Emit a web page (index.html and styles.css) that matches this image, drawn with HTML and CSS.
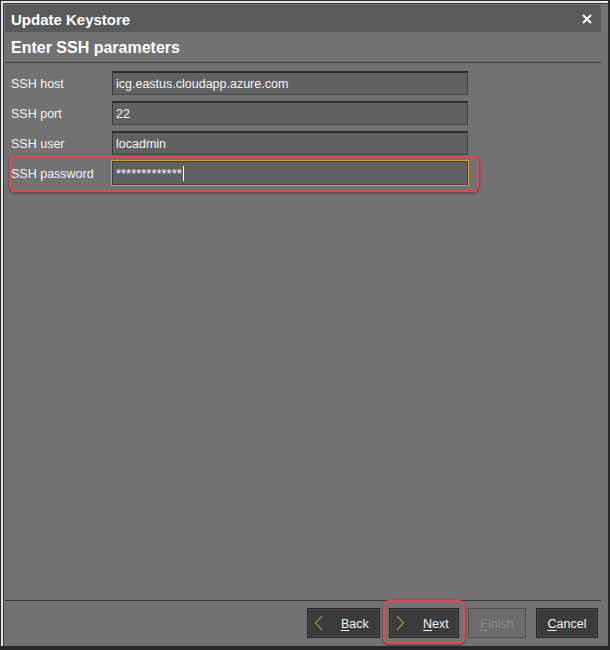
FILE: index.html
```html
<!DOCTYPE html>
<html>
<head>
<meta charset="utf-8">
<link rel="stylesheet" href="styles.css">
</head>
<body>
<div class="win">
  <div class="hl">
    <div class="in">
      <div class="titlebar">
        <span class="title">Update Keystore</span>
        <svg class="close" width="10" height="10" viewBox="0 0 10 10"><path d="M1 1 L9 9 M9 1 L1 9" stroke="#ffffff" stroke-width="2" fill="none"/></svg>
      </div>
      <div class="header">Enter SSH parameters</div>
      <div class="form">
        <div class="row"><span class="label">SSH host</span><div class="field">icg.eastus.cloudapp.azure.com</div></div>
        <div class="row"><span class="label">SSH port</span><div class="field">22</div></div>
        <div class="row"><span class="label">SSH user</span><div class="field">locadmin</div></div>
        <div class="row"><span class="label">SSH password</span><div class="field focus">*************<span class="caret"></span></div></div>
      </div>
      <div class="footer">
        <button class="btn back"><svg class="chev" width="9" height="16" viewBox="0 0 9 16"><path d="M8 1 L1.5 8 L8 15" stroke="#a48a52" stroke-width="1.2" fill="none"/></svg><span><u>B</u>ack</span></button>
        <button class="btn next"><svg class="chev" width="9" height="16" viewBox="0 0 9 16"><path d="M1 1 L7.5 8 L1 15" stroke="#a48a52" stroke-width="1.2" fill="none"/></svg><span><u>N</u>ext</span></button>
        <button class="btn finish"><span><u>F</u>inish</span></button>
        <button class="btn cancel"><span><u>C</u>ancel</span></button>
      </div>
    </div>
  </div>
  <div class="mark mark-pw"></div>
  <div class="mark mark-next"></div>
</div>
</body>
</html>
```
FILE: styles.css
```css
html, body {
  margin: 0;
  padding: 0;
  background: #262626;
}
body {
  font-family: "Liberation Sans", Arial, sans-serif;
  color: #f4f4f4;
}
.win {
  position: relative;
  width: 610px;
  height: 650px;
  box-sizing: border-box;
  border-top: 1px solid #2b2b2b;
  border-left: 1px solid #2b2b2b;
  border-right: 2px solid #262626;
  border-bottom: 4px solid #262626;
  background: #727272;
  display: flex;
}
.hl {
  flex: 1;
  display: flex;
  border-top: 2px solid #e4e4e4;
  border-left: 2px solid #e4e4e4;
}
.in {
  flex: 1;
  display: flex;
  flex-direction: column;
  border-top: 1px solid #3a3a3a;
  border-left: 1px solid #3a3a3a;
  padding: 1px 7px 0 1px;
}
.titlebar {
  height: 27px;
  background: #5a5a5a;
  display: flex;
  align-items: center;
  justify-content: space-between;
  padding: 0 9px 0 6px;
}
.title {
  font-weight: bold;
  font-size: 15px;
  color: #ffffff;
  padding-top: 1px;
}
.close {
  display: block;
  margin-top: 1px;
}
.header {
  border-bottom: 1px solid #3a3a3a;
  display: flex;
  align-items: center;
  padding-left: 6px;
  font-weight: bold;
  font-size: 16px;
  color: #ffffff;
  padding-top: 1px;
  box-sizing: border-box;
  height: 31px;
}
.form {
  flex: 1;
  display: flex;
  flex-direction: column;
  gap: 6px;
  padding: 8px 0 0 6px;
}
.row {
  display: flex;
  align-items: center;
  height: 24px;
}
.label {
  width: 101px;
  font-size: 12.5px;
  color: #f2f2f2;
  padding-top: 2px;
}
.field {
  width: 356px;
  height: 24px;
  box-sizing: border-box;
  background: #616161;
  border-top: 2px solid #2c2c2c;
  border-left: 1px solid #383838;
  border-right: 1px solid #404040;
  border-bottom: 1px solid #454545;
  font-size: 12.5px;
  color: #f6f6f6;
  padding: 0 0 0 3px;
  display: flex;
  align-items: center;
}
.field.focus {
  box-shadow: 0 0 0 1px #c9a23a;
  border-top: 1px solid #3c3c3c;
  border-left: 1px solid #3c3c3c;
  padding-top: 1px;
  font-size: 13px;
}
.caret {
  display: inline-block;
  width: 1px;
  height: 15px;
  background: #ffffff;
  margin-left: 1px;
}
.footer {
  border-top: 1px solid #3a3a3a;
  padding: 7px 3px 8px 0;
  display: flex;
  justify-content: flex-end;
  gap: 9px;
}
.btn {
  height: 30px;
  box-sizing: border-box;
  background: #3b3b3b;
  border: 1px solid #242424;
  box-shadow: inset 0 0 0 1px #4a4a4a;
  color: #f4f4f4;
  font-family: "Liberation Sans", Arial, sans-serif;
  font-size: 12.5px;
  display: flex;
  align-items: center;
  padding: 1px 0 0 0;
  margin: 0;
  position: relative;
}
.btn u {
  text-decoration-thickness: 1px;
  text-underline-offset: 2px;
}
.chev {
  display: block;
  position: absolute;
  left: 6px;
  top: 6px;
}
.back {
  width: 73px;
  padding-left: 33px;
}
.next {
  width: 70px;
  padding-left: 33px;
}
.finish {
  width: 58px;
  background: #6c6c6c;
  border-color: #4e4e4e;
  box-shadow: none;
  color: #8c8c8c;
  justify-content: center;
}
.cancel {
  width: 62px;
  justify-content: center;
  margin-left: 1px;
}
.mark {
  position: absolute;
  box-sizing: border-box;
  border: 2px solid #e8464b;
  border-radius: 6px;
  box-shadow: 0 1px 3px rgba(0, 0, 0, 0.45);
}
.mark-pw {
  left: 8px;
  top: 154px;
  width: 470px;
  height: 37px;
}
.mark-next {
  left: 382px;
  top: 599px;
  width: 82px;
  height: 44px;
}
```
